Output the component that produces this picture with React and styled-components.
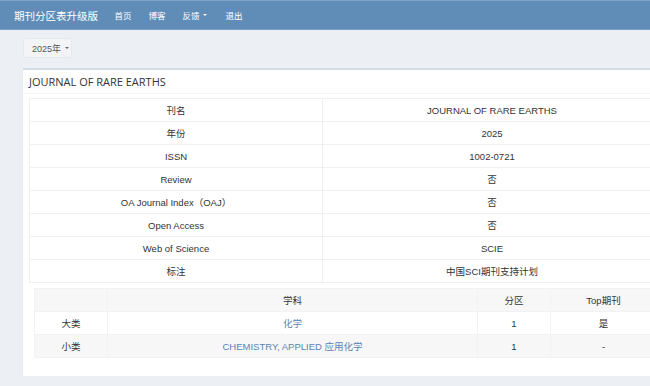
import React from "react";
import styled, { createGlobalStyle } from "styled-components";

const GlobalStyle = createGlobalStyle`
  html, body {
    margin: 0;
    padding: 0;
    background: #eceff3;
    overflow: hidden;
    font-family: "Liberation Sans", "Noto Sans CJK SC", sans-serif;
    color: #333;
  }
`;

const Navbar = styled.div`
  height: 28px;
  display: flex;
  align-items: center;
  padding-left: 14px;
  background: #5f8db8;
  border-top: 1px solid #7fa3c6;
  border-bottom: 1px solid #7c9fc2;
`;

const Brand = styled.div`
  font-family: "Noto Sans CJK SC", sans-serif;
  font-size: 10.5px;
  color: #fff;
  padding-right: 8px;
`;

const NavLink = styled.div`
  font-family: "Noto Sans CJK SC", sans-serif;
  font-size: 8.5px;
  color: #fff;
  padding: 0 8.5px;
  display: flex;
  align-items: center;
  gap: 3px;
  margin-right: ${p => (p.$wide ? "2px" : "0")};
`;

const Caret = styled.span`
  display: inline-block;
  width: 0;
  height: 0;
  border-left: 2.5px solid transparent;
  border-right: 2.5px solid transparent;
  border-top: 2.5px solid ${p => p.$color || "#fff"};
`;

const Content = styled.div`
  padding: 8px 0 0 23px;
`;

const YearButton = styled.div`
  width: 49px;
  height: 20px;
  box-sizing: border-box;
  display: flex;
  align-items: center;
  gap: 4px;
  padding-left: 8px;
  background: #f3f4f6;
  border: 1px solid #e6e8eb;
  border-radius: 2px;
  font-size: 9px;
  color: #555;
`;

const Panel = styled.div`
  margin-top: 10px;
  width: 645px;
  background: #fff;
  border-top: 2px solid #d6dce3;
  box-shadow: 0 1px 2px rgba(0, 0, 0, 0.06);
  padding-bottom: 18px;
`;

const PanelHeading = styled.div`
  height: 23px;
  display: flex;
  align-items: center;
  padding-left: 6px;
  border-bottom: 1px solid #f4f4f4;
  font-family: "Open Sans", sans-serif;
  font-size: 11px;
  color: #333;
`;

const PanelBody = styled.div`
  padding: 4px 6px 0;
`;

const InfoTable = styled.table`
  width: 633px;
  border-collapse: collapse;
  table-layout: fixed;
  border: 1px solid #f1f1f1;
`;

const Cell = styled.td`
  height: 22px;
  padding: 0;
  text-align: center;
  font-size: 9.5px;
  color: #333;
  border: 1px solid #f0f0f0;
  width: ${p => p.$w || "auto"};
`;

const SubjectWrap = styled.div`
  padding: 5px 11px 0;
`;

const SubjectTable = styled.table`
  width: 623px;
  border-collapse: collapse;
  table-layout: fixed;
`;

const Row = styled.tr`
  background: ${p => (p.$striped ? "#f7f7f7" : "#fff")};
`;

const SubjectCell = styled.td`
  height: 22px;
  padding: 0;
  text-align: center;
  font-size: 9.5px;
  color: ${p => (p.$link ? "#5b83b3" : "#333")};
  border: 1px solid #f2f2f2;
  width: ${p => p.$w || "auto"};
`;

const info = [
  ["刊名", "JOURNAL OF RARE EARTHS"],
  ["年份", "2025"],
  ["ISSN", "1002-0721"],
  ["Review", "否"],
  ["OA Journal Index（OAJ）", "否"],
  ["Open Access", "否"],
  ["Web of Science", "SCIE"],
  ["标注", "中国SCI期刊支持计划"],
];

const App = () => {
  return (
    <>
      <GlobalStyle />
      <Navbar>
        <Brand>期刊分区表升级版</Brand>
        <NavLink>首页</NavLink>
        <NavLink>博客</NavLink>
        <NavLink $wide>反馈 <Caret /></NavLink>
        <NavLink>退出</NavLink>
      </Navbar>
      <Content>
        <YearButton>2025年 <Caret $color="#666" /></YearButton>
        <Panel>
          <PanelHeading>JOURNAL OF RARE EARTHS</PanelHeading>
          <PanelBody>
            <InfoTable>
              <tbody>
                {info.map(([k, v]) => (
                  <tr key={k}>
                    <Cell $w="292px">{k}</Cell>
                    <Cell>{v}</Cell>
                  </tr>
                ))}
              </tbody>
            </InfoTable>
          </PanelBody>
          <SubjectWrap>
            <SubjectTable>
              <tbody>
                <Row $striped>
                  <SubjectCell $w="72px"></SubjectCell>
                  <SubjectCell $w="369px">学科</SubjectCell>
                  <SubjectCell $w="72px">分区</SubjectCell>
                  <SubjectCell>Top期刊</SubjectCell>
                </Row>
                <Row>
                  <SubjectCell>大类</SubjectCell>
                  <SubjectCell $link>化学</SubjectCell>
                  <SubjectCell>1</SubjectCell>
                  <SubjectCell>是</SubjectCell>
                </Row>
                <Row $striped>
                  <SubjectCell>小类</SubjectCell>
                  <SubjectCell $link>CHEMISTRY, APPLIED 应用化学</SubjectCell>
                  <SubjectCell>1</SubjectCell>
                  <SubjectCell>-</SubjectCell>
                </Row>
              </tbody>
            </SubjectTable>
          </SubjectWrap>
        </Panel>
      </Content>
    </>
  );
};

export default App;
